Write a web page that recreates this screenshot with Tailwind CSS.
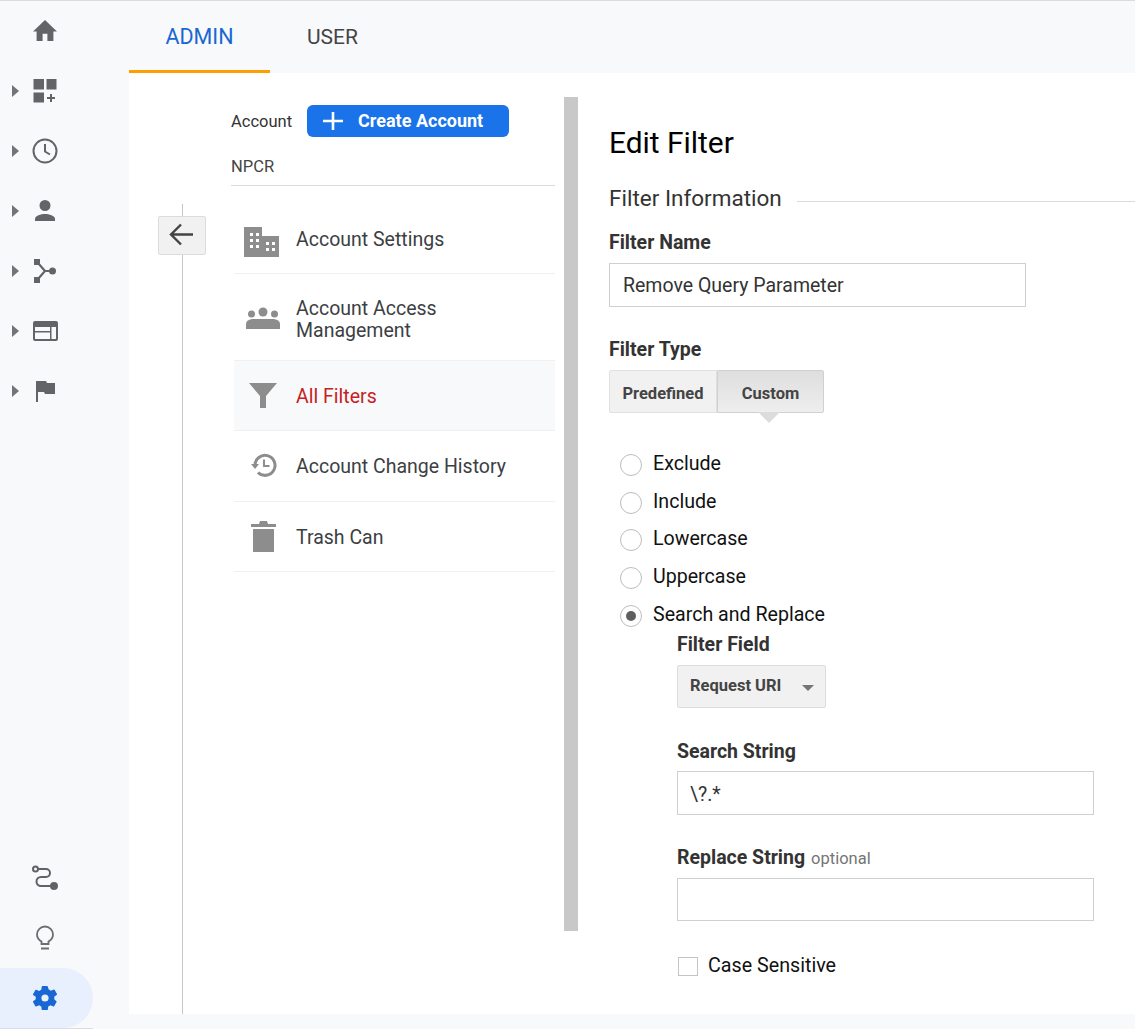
<!DOCTYPE html>
<html><head><meta charset="utf-8"><script src="https://cdn.jsdelivr.net/npm/@tailwindcss/browser@4"></script></head>
<body class="font-['Roboto',sans-serif]">
<div class="w-[1135px] h-[1029px] overflow-hidden bg-[#f8f9fb] border-t border-[#dadce0] flex">
  <!-- sidebar -->
  <aside class="w-[129px] shrink-0 flex flex-col justify-between h-[1028px] text-[#5f6368]">
    <div class="flex flex-col">
      <div class="h-[60px] pl-[33px] pb-[2px] flex items-center"><svg class="w-[24px] h-[21px]" viewBox="2 3 20 17.500" fill="#636468" preserveAspectRatio="none"><path d="M10 20.500v-6h4v6h5v-8h3L12 3 2 12.500h3v8z"/></svg></div>
      <div class="h-[60px] flex items-center relative pl-[33px]"><span class="absolute left-[12px] top-[24px] w-0 h-0 border-y-[6px] border-y-transparent border-l-[7px] border-l-[#70757a]"></span><svg class="w-[24px] h-[24px]" viewBox="0 0 24 24" fill="#636468"><path d="M0.500 0h10.500v10.500h-10.500zM13.500 0h10v10.500h-10zM0.500 13.500h10.500v10h-10.500zM17 15h2v3h3v2h-3v3h-2v-3h-3v-2h3z"/></svg></div>
      <div class="h-[60px] flex items-center relative pl-[33px]"><span class="absolute left-[12px] top-[24px] w-0 h-0 border-y-[6px] border-y-transparent border-l-[7px] border-l-[#70757a]"></span><svg class="w-[26px] h-[26px] -ml-px" viewBox="0 0 26 26" fill="none" stroke="#636468" stroke-width="2"><circle cx="13" cy="13" r="11.500"/><path d="M13 6v7.500l5 3"/></svg></div>
      <div class="h-[60px] flex items-center relative pl-[33px]"><span class="absolute left-[12px] top-[24px] w-0 h-0 border-y-[6px] border-y-transparent border-l-[7px] border-l-[#70757a]"></span><svg class="w-[24px] h-[24px]" viewBox="0 0 24 24" fill="#636468"><path d="M12 12a5.500 5.500 0 1 0 0-11 5.500 5.500 0 0 0 0 11zm0 3c-4 0-10 1.500-10 5v2h20v-2c0-3.500-6-5-10-5z"/></svg></div>
      <div class="h-[60px] flex items-center relative pl-[33px]"><span class="absolute left-[12px] top-[24px] w-0 h-0 border-y-[6px] border-y-transparent border-l-[7px] border-l-[#70757a]"></span><svg class="w-[24px] h-[24px]" viewBox="0 0 24 24" fill="#636468"><path d="M1 0h6v6H1zM1 18h6v6H1z"/><circle cx="19.500" cy="12" r="3.500"/><path d="M5 4l7 8-7 8M12 12h7" fill="none" stroke="#636468" stroke-width="2.200"/></svg></div>
      <div class="h-[60px] flex items-center relative pl-[33px]"><span class="absolute left-[12px] top-[24px] w-0 h-0 border-y-[6px] border-y-transparent border-l-[7px] border-l-[#70757a]"></span><svg class="w-[25px] h-[20px]" viewBox="0 0 25 20" fill="#636468"><path fill-rule="evenodd" d="M2 0h21a2 2 0 0 1 2 2v16a2 2 0 0 1-2 2H2a2 2 0 0 1-2-2V2a2 2 0 0 1 2-2zM2 6v4h15V6zm16.500 0v4H23V6zM2 11.500V18h15v-6.500zm16.500-1.500V18H23v-8z"/></svg></div>
      <div class="h-[60px] flex items-center relative pl-[36px]"><span class="absolute left-[12px] top-[24px] w-0 h-0 border-y-[6px] border-y-transparent border-l-[7px] border-l-[#70757a]"></span><svg class="w-[19px] h-[21px]" viewBox="0 0 19 21" fill="#636468"><path d="M0 0h10l1 2h8v11H9l-1-2H2v10H0z"/></svg></div>
    </div>
    <div class="flex flex-col">
      <div class="h-[60px] pl-[32px] flex items-center"><svg class="w-[26px] h-[26px]" viewBox="0 0 26 26" fill="none" stroke="#5f6368" stroke-width="2"><circle cx="3.500" cy="4" r="2.500"/><path d="M6 4h8a3.500 3.500 0 0 1 0 8H9a3.500 3.500 0 0 0 0 9h11"/><circle cx="22" cy="21" r="3" fill="#5f6368"/></svg></div>
      <div class="h-[60px] pl-[36px] flex items-center"><svg class="w-[18px] h-[26px]" viewBox="0 0 18 26" fill="none" stroke="#6b6d70" stroke-width="1.800"><path d="M5.500 19v-2.500C3 15 1 12.500 1 9.500a8 8 0 0 1 16 0c0 3-2 5.500-4.500 7V19z"/><path d="M5 23.500h8" stroke-width="2"/></svg></div>
      <div class="h-[60px] w-[93px] rounded-r-[30px] bg-[#e8f0fe] pl-[33px] flex items-center"><svg class="w-[24px] h-[24px]" viewBox="0 0 20 20" fill="#1967d2"><path fill-rule="evenodd" d="M17.400 11a7.500 7.500 0 0 0 0-2l2.200-1.700a.5.5 0 0 0 .1-.7l-2-3.500a.5.5 0 0 0-.6-.2l-2.600 1a7.500 7.500 0 0 0-1.700-1L12 .4a.5.5 0 0 0-.5-.4h-4a.5.5 0 0 0-.5.400l-.4 2.700a7.500 7.500 0 0 0-1.700 1l-2.600-1a.5.5 0 0 0-.6.2l-2 3.500a.5.5 0 0 0 .1.700L2 9a7.500 7.500 0 0 0 0 2L-.200 12.700a.5.5 0 0 0-.1.700l2 3.500a.5.5 0 0 0 .6.2l2.600-1a7.500 7.500 0 0 0 1.700 1l.4 2.700a.5.5 0 0 0 .5.400h4a.5.5 0 0 0 .5-.4l.4-2.700a7.500 7.500 0 0 0 1.700-1l2.600 1a.5.5 0 0 0 .6-.2l2-3.500a.5.5 0 0 0-.1-.7zM9.700 13a3 3 0 1 1 0-6 3 3 0 0 1 0 6z" transform="translate(.3 0)"/></svg></div>
      <div class="h-px w-[93px] bg-[#dadce0]"></div>
    </div>
  </aside>
  <div class="flex-1 flex flex-col h-[1028px]">
    <!-- tabs -->
    <nav class="h-[72px] shrink-0 flex leading-[24px]">
      <div class="w-[141px] text-center pt-[24px] text-[21.500px] text-[#1a67d2] border-b-[3px] border-[#ff9e00]">ADMIN</div>
      <div class="ml-[37px] pt-[24px] text-[21px] text-[#444]">USER</div>
    </nav>
    <!-- white -->
    <main class="h-[941px] shrink-0 bg-white flex relative">
      <!-- back col -->
      <div class="w-[102px] shrink-0 relative">
        <div class="absolute left-[53px] top-[131px] bottom-0 w-px bg-[#c6c6c6]"></div>
        <div class="absolute left-[29px] top-[143px] w-[48px] h-[39px] bg-[#f1f1f1] border border-[#dcdcdc] rounded-[2px] flex items-center justify-center"><svg class="w-[26px] h-[26px] -mt-[1px]" viewBox="0 0 26 26" fill="none" stroke="#444" stroke-width="2.400"><path d="M24 12.500H2M12 2.500 2 12.500l10 10"/></svg></div>
      </div>
      <!-- account col -->
      <div class="w-[324px] shrink-0">
        <div class="flex items-center pt-[32px] h-[64px]">
          <span class="text-[16.500px] text-[#333] leading-[32px] mt-[2px]">Account</span>
          <button class="ml-[15px] w-[202px] h-[32px] rounded-[6px] bg-[#1a73e8] text-white flex items-center text-[18px] font-bold pl-[16px]"><svg class="w-[20px] h-[20px] mr-[15px]" viewBox="0 0 20 20" fill="none" stroke="#fff" stroke-width="2.600"><path d="M10 1v18M0 10h20"/></svg><span class="-mt-[2px]">Create Account</span></button>
        </div>
        <div class="h-[49px] border-b border-[#dadada] text-[16.500px] leading-[19px] pt-[20px] text-[#444]">NPCR</div>
        <div class="ml-[3px] border-b border-[#f0f0f0] h-[88px] pt-[24px] flex items-center"><svg class="w-[36px] h-[30px] ml-[10px] mr-[16px]" viewBox="0 0 36 30" fill="#8d8d8d"><path fill-rule="evenodd" d="M0 0h18v9h17v21H0zM6 6v3h3V6zm6 0v3h3V6zM6 12v3h3v-3zm6 0v3h3v-3zM6 18v3h3v-3zm6 0v3h3v-3zm10-3v3h3v-3zm6 0v3h3v-3zm-6 6v3h3v-3zm6 0v3h3v-3z"/></svg><span class="text-[19.500px] text-[#3c4043] -mt-[3px]">Account Settings</span></div>
        <div class="ml-[3px] border-b border-[#f0f0f0] h-[87px] pt-[6px] flex items-center"><svg class="w-[34px] h-[22px] ml-[12px] mr-[17px] -mt-[5px]" viewBox="0 0 34 22" fill="#8d8d8d"><circle cx="17" cy="5" r="4.500"/><circle cx="5.500" cy="7" r="3.500"/><circle cx="28.500" cy="7" r="3.500"/><path d="M0 22v-5q0-4 6-5h22q6 1 6 5v5z"/></svg><span class="text-[19.500px] leading-[22px] text-[#3c4043] ml-[-1px]">Account Access<br>Management</span></div>
        <div class="ml-[3px] border-b border-[#f0f0f0] h-[70px] flex items-center bg-[#f8f9fa]"><svg class="w-[28px] h-[25px] ml-[15px] mr-[19px] -mt-[1px]" viewBox="0 0 28 25" fill="#8d8d8d"><path d="M0 0h28L17 13v12h-6V13z"/></svg><span class="text-[19.500px] text-[#c5221f] mt-[2px]">All Filters</span></div>
        <div class="ml-[3px] border-b border-[#f0f0f0] h-[71px] flex items-center"><svg class="w-[26px] h-[26px] ml-[17px] mr-[20px] -mt-[3px]" viewBox="0 0 26 26" fill="none" stroke="#8d8d8d" stroke-width="3"><path d="M4 13.500A10 10 0 1 1 7 20.500"/><path d="M0 12h8l-4 5z" fill="#8d8d8d" stroke="none"/><path d="M13 7.500v6.500h5.500" stroke-width="2"/></svg><span class="text-[19.500px] text-[#3c4043] mt-[2px] ml-[-1px]">Account Change History</span></div>
        <div class="ml-[3px] border-b border-[#f0f0f0] h-[70px] flex items-center"><svg class="w-[25px] h-[31px] ml-[17px] mr-[21px]" viewBox="0 0 25 31" fill="#8d8d8d"><path d="M2 8h21v23H2zM0 3h8l1-3h7l1 3h8v3H0z"/></svg><span class="text-[19.500px] text-[#3c4043] mt-[2px] ml-[-1px]">Trash Can</span></div>
      </div>
      <!-- scrollbar -->
      <div class="ml-[9px] w-[14px] h-[834px] mt-[24px] bg-[#c8c8c8] shrink-0"></div>
      <!-- form -->
      <section class="ml-[31px] flex-1 min-w-0">
        <h1 class="text-[29.900px] leading-[34px] text-black pt-[53px] h-[87px]">Edit Filter</h1>
        <div class="flex items-center mt-[21px] h-[36px]"><span class="text-[22.500px] text-[#333]">Filter Information</span><div class="ml-[15px] flex-1 h-px bg-[#dadada] mt-[4px]"></div></div>
        <div class="mt-[15px] text-[19.500px] font-bold leading-[22px] text-[#333]">Filter Name</div>
        <div class="mt-[9px] w-[417px] h-[44px] pt-[2px] border border-[#d0d0d0] flex items-center pl-[13px] text-[19.500px] text-[#333]">Remove Query Parameter</div>
        <div class="mt-[32px] text-[19.500px] font-bold leading-[22px] text-[#333]">Filter Type</div>
        <div class="mt-[9px] flex w-[215px] h-[43px] relative text-[16.500px] font-bold text-[#444]">
          <div class="w-[108px] pt-[5px] bg-[#f1f1f1] border border-[#e0e0e0] rounded-l-[2px] flex items-center justify-center">Predefined</div>
          <div class="w-[107px] pt-[5px] bg-linear-to-b from-[#dedede] to-[#eeeeee] border border-[#d0d0d0] rounded-r-[2px] flex items-center justify-center">Custom</div>
          <span class="absolute left-[149px] top-[42px] w-0 h-0 border-x-[11px] border-x-transparent border-t-[11px] border-t-[#dcdcdc]"></span>
        </div>
        <div class="mt-[33px] pl-[11px] flex flex-col text-[19.600px] text-[#111]">
          <label class="h-[38px] flex items-center"><span class="w-[22px] h-[22px] rounded-full border border-[#bdbdbd] mr-[11px]"></span><span class="-mt-[2px]">Exclude</span></label>
          <label class="h-[37px] flex items-center"><span class="w-[22px] h-[22px] rounded-full border border-[#bdbdbd] mr-[11px]"></span><span class="-mt-[2px]">Include</span></label>
          <label class="h-[38px] flex items-center"><span class="w-[22px] h-[22px] rounded-full border border-[#bdbdbd] mr-[11px]"></span><span class="-mt-[2px]">Lowercase</span></label>
          <label class="h-[38px] flex items-center"><span class="w-[22px] h-[22px] rounded-full border border-[#bdbdbd] mr-[11px]"></span><span class="-mt-[2px]">Uppercase</span></label>
          <label class="h-[38px] flex items-center"><span class="w-[22px] h-[22px] rounded-full border border-[#bdbdbd] mr-[11px] flex items-center justify-center"><span class="w-[10px] h-[10px] rounded-full bg-[#5f5f5f]"></span></span><span class="-mt-[2px]">Search and Replace</span></label>
        </div>
        <div class="pl-[68px]">
          <div class="text-[19.500px] font-bold leading-[22px] text-[#333] -mt-[1px]">Filter Field</div>
          <div class="mt-[9px] w-[149px] h-[43px] bg-[#f1f1f1] border border-[#dcdcdc] rounded-[2px] flex items-center pl-[12px] text-[16.500px] font-bold text-[#444]">Request URI<span class="ml-[21px] mt-[2px] w-0 h-0 border-x-[6px] border-x-transparent border-t-[6px] border-t-[#757575]"></span></div>
          <div class="mt-[33px] text-[19.500px] font-bold leading-[22px] text-[#333]">Search String</div>
          <div class="mt-[8px] w-[417px] h-[44px] pt-[4px] border border-[#d0d0d0] flex items-center pl-[12px] text-[19.500px] text-[#333]">\?.*</div>
          <div class="mt-[32px] flex items-baseline leading-[22px]"><span class="text-[19.500px] font-bold text-[#333]">Replace String</span><span class="ml-[6px] text-[16.500px] text-[#757575]">optional</span></div>
          <div class="mt-[8px] w-[417px] h-[43px] border border-[#d0d0d0]"></div>
          <label class="mt-[33px] flex items-center text-[19.700px] text-[#111] h-[24px]"><span class="w-[20px] h-[19px] border border-[#c4c4c4] ml-[1px] mr-[10px]"></span>Case Sensitive</label>
        </div>
      </section>
    </main>
  </div>
</div>
</body></html>
